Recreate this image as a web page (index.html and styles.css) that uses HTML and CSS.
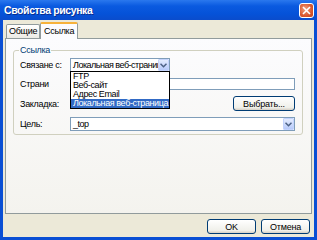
FILE: index.html
```html
<!DOCTYPE html>
<html lang="ru">
<head>
<meta charset="utf-8">
<link rel="stylesheet" href="styles.css">
</head>
<body>
<div class="window">
  <div class="titlebar">
    <span class="title">Свойства рисунка</span>
    <span class="close"><svg width="9" height="9" viewBox="0 0 9 9"><path d="M1 1L8 8M8 1L1 8" stroke="#fff" stroke-width="1.6"/></svg></span>
  </div>
  <div class="client">
    <div class="tabs">
      <div class="tab">Общие</div>
      <div class="tab active">Ссылка</div>
    </div>
    <div class="panel">
      <fieldset class="group">
        <legend>Ссылка</legend>
        <div class="row r1">
          <span class="label">Связане с:</span>
          <div class="combo short">
            <span class="value">Локальная веб-страница</span>
            <span class="arrow"><svg width="7" height="5" viewBox="0 0 7 5"><path d="M0.5 0.8L3.5 3.8L6.5 0.8" fill="none" stroke="#4d6185" stroke-width="1.5"/></svg></span>
            <div class="dropdown">
              <div class="item">FTP</div>
              <div class="item">Веб-сайт</div>
              <div class="item">Адрес Email</div>
              <div class="item sel">Локальная веб-страница</div>
            </div>
          </div>
        </div>
        <div class="row r2">
          <span class="label">Страни</span>
          <div class="input"></div>
        </div>
        <div class="row r3">
          <span class="label">Закладка:</span>
          <div class="spacer"></div>
          <button class="btn pick">Выбрать...</button>
        </div>
        <div class="row r4">
          <span class="label">Цель:</span>
          <div class="combo wide">
            <span class="value">_top</span>
            <span class="arrow"><svg width="7" height="5" viewBox="0 0 7 5"><path d="M0.5 0.8L3.5 3.8L6.5 0.8" fill="none" stroke="#4d6185" stroke-width="1.5"/></svg></span>
          </div>
        </div>
      </fieldset>
    </div>
    <div class="buttons">
      <button class="btn">OK</button>
      <button class="btn">Отмена</button>
    </div>
  </div>
</div>
</body>
</html>
```
FILE: styles.css
```css
* { box-sizing: border-box; }
html, body { margin: 0; padding: 0; }
body {
  width: 317px; height: 240px; overflow: hidden;
  font-family: "Liberation Sans", Arial, sans-serif;
  font-size: 9px; letter-spacing: -0.3px; color: #000;
}
.window {
  width: 317px; height: 240px;
  display: flex; flex-direction: column;
  background: #0a4fd4;
  padding: 0 3px 3px 3px;
}
.titlebar {
  height: 20px; margin: 0 -3px;
  background: linear-gradient(#2a78ee, #0a5ae0 30%, #0552d8 70%, #0a4ccc);
  display: flex; align-items: center; justify-content: space-between;
  padding: 0 3px 0 4px;
}
.title { color: #fff; font-weight: bold; font-size: 10.5px; letter-spacing: -0.4px; text-shadow: 1px 1px #0a2f8f; }
.close {
  width: 15px; height: 15px; border-radius: 3px;
  border: 1px solid #fff;
  background: radial-gradient(circle at 40% 40%, #f0a080, #d85830 60%, #c04018);
  display: flex; align-items: center; justify-content: center;
  margin-top: 1px;
}
.client {
  flex: 1; background: #ece9d8;
  display: flex; flex-direction: column;
  padding: 2px 2px 0 2px;
}
.tabs { display: flex; padding-left: 1px; height: 16px; align-items: flex-end; position: relative; z-index: 1; }
.tab {
  height: 14px; padding: 0 2px; line-height: 13px;
  border: 1px solid #919b9c; border-bottom: none;
  background: linear-gradient(#fff, #ecebe5);
  border-radius: 2px 2px 0 0;
}
.tab.active {
  height: 17px; margin-bottom: -1px; padding: 0 3px; line-height: 15px;
  background: #fcfcfe;
  border-top: 2px solid #f7b23a;
}
.panel {
  height: 176px;
  border: 1px solid #919b9c;
  background: linear-gradient(#fcfcfe, #f4f3ee);
  padding: 6px 8px 0 7px;
}
.group {
  margin: 0; height: 90px;
  border: 1px solid #d0d0bf; border-radius: 3px;
  padding: 2px 7px 0 6px;
  display: flex; flex-direction: column;
}
.group legend { padding: 0 1px; margin-left: -1px; color: #003c74; }
.row { display: flex; align-items: center; position: relative; flex: none; }
.r1 { height: 16px; }
.r2 { height: 21px; }
.r3 { height: 19px; }
.r4 { height: 22px; }
.label { width: 50px; flex: none; white-space: nowrap; }
.spacer { flex: 1; }
.combo {
  height: 14px; border: 1px solid #7f9db9; background: #fff;
  display: flex; align-items: center; position: relative;
}
.combo.short { width: 100px; }
.combo.wide { flex: 1; }
.value { flex: 1; padding-left: 2px; white-space: nowrap; overflow: hidden; letter-spacing: -0.5px; }
.arrow {
  width: 11px; height: 12px;
  background: linear-gradient(#e4ecfe, #b7cafa);
  border: 1px solid #c3d3fd; border-radius: 1px;
  display: flex; align-items: center; justify-content: center;
}
.dropdown {
  position: absolute; left: -1px; top: 12px; width: 100px;
  background: #fff; border: 1px solid #000; z-index: 5;
}
.item { height: 9px; line-height: 9px; padding-left: 2px; white-space: nowrap; letter-spacing: -0.4px; overflow: hidden; }
.item.sel { background: #316ac5; color: #fff; }
.input { flex: 1; height: 12px; border: 1px solid #7f9db9; background: #fff; }
.btn {
  font-family: inherit; font-size: 9px; letter-spacing: -0.2px; color: #000;
  height: 15px; padding: 0;
  border: 1px solid #003c74; border-radius: 3px;
  background: linear-gradient(#fff, #f0f0ea 80%, #d6d0c5);
}
.btn.pick { width: 62px; }
.buttons { display: flex; justify-content: flex-end; gap: 5px; padding: 5px 2px 0 0; }
.buttons .btn { width: 49px; }
```
